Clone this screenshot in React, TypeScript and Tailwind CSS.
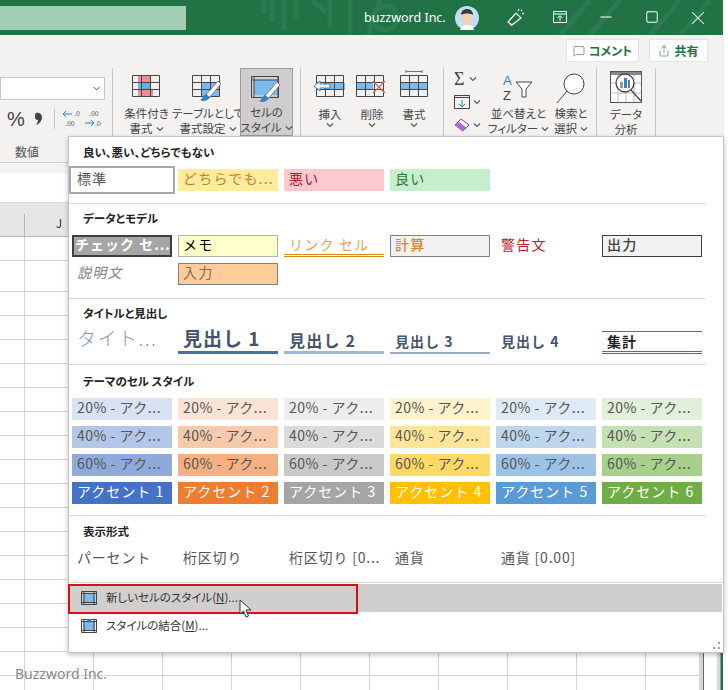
import { Minus, Square, X, MessageSquare, Share, ChevronDown } from "lucide-react";

const jp = { fontFamily: '"Noto Sans CJK JP", "Noto Sans", sans-serif' };

function Chev({ className = "" }: { className?: string }) {
  return (
    <svg width="8" height="6" viewBox="0 0 8 6" className={className}>
      <path d="M1 1.5 L4 4.5 L7 1.5" fill="none" stroke="#555" strokeWidth="1.1" />
    </svg>
  );
}

function TableBase({ children }: { children?: React.ReactNode }) {
  return (
    <svg width="30" height="24" viewBox="0 0 30 24">
      {children}
      <path d="M.5.5h27v21H.5zM.5 7.5h27M.5 14.5h27M9.5.5v21M18.5.5v21" fill="none" stroke="#444" />
    </svg>
  );
}

function Brush() {
  return (
    <g>
      <path d="M13 21 L26 6 L29 9 L17 23 Z" fill="#fff" stroke="#666" strokeWidth="0.8" />
      <path d="M8 25 C11 24 11 20 14 19 L18 22 C16 26 11 27 8 25Z" fill="#2e86c8" />
    </g>
  );
}

function RibbonBtn({ l1, l2, icon, w, active }: { l1: string; l2: string; icon: React.ReactNode; w: string; active?: boolean }) {
  return (
    <div className={`${w} h-[68px] shrink-0 flex flex-col items-center ${active ? "bg-[#cfcdcd] border border-[#9d9b9b]" : ""}`}>
      <div className="h-[39px] pt-[7px] flex items-start justify-center">{icon}</div>
      <div className="text-[11.5px] leading-[15px] text-[#444] text-center whitespace-nowrap [font-feature-settings:'palt']">{l1}</div>
      <div className="text-[11.5px] leading-[15px] text-[#444] text-center whitespace-nowrap flex items-center gap-[3px] [font-feature-settings:'palt']">
        {l2}
        <Chev />
      </div>
    </div>
  );
}

function Sep() {
  return <div className="w-px h-[68px] bg-[#c6c6c6] shrink-0" />;
}

type Tile = { t: string; c: string };

function StyleTile({ t, c }: Tile) {
  return (
    <div className={`w-[100px] h-[22px] shrink-0 pl-[5px] text-[14px] leading-[18px] tracking-[1.2px] whitespace-nowrap overflow-hidden ${c}`}>
      {t}
    </div>
  );
}

function Section({ title, children, full }: { title: string; children: React.ReactNode; full?: boolean }) {
  return (
    <div className={`border-b border-[#dcdcdc] ${full ? "w-full" : "w-[637px]"}`}>
      <div className="pl-[14px] text-[11.5px] font-bold leading-[16px] text-[#222] whitespace-nowrap [font-feature-settings:'palt']">{title}</div>
      {children}
    </div>
  );
}

const accents = [
  { a: "bg-[#d9e2f3]", b: "bg-[#b4c6e7]", c: "bg-[#8eaadb]", d: "bg-[#4472c4]", n: "アクセント 1" },
  { a: "bg-[#fbe4d5]", b: "bg-[#f7caac]", c: "bg-[#f4b083]", d: "bg-[#ed7d31]", n: "アクセント 2" },
  { a: "bg-[#ededed]", b: "bg-[#dbdbdb]", c: "bg-[#c9c9c9]", d: "bg-[#a5a5a5]", n: "アクセント 3" },
  { a: "bg-[#fff2cc]", b: "bg-[#ffe599]", c: "bg-[#ffd966]", d: "bg-[#ffc000]", n: "アクセント 4" },
  { a: "bg-[#deeaf6]", b: "bg-[#bdd6ee]", c: "bg-[#9cc2e5]", d: "bg-[#5b9bd5]", n: "アクセント 5" },
  { a: "bg-[#e2efd9]", b: "bg-[#c5e0b3]", c: "bg-[#a8d08d]", d: "bg-[#70ad47]", n: "アクセント 6" },
];

function Menu() {
  return (
    <div className="absolute left-[68px] top-[136px] w-[656px] h-[517px] bg-white border border-[#c8c8c8] shadow-[0_2px_5px_rgba(0,0,0,0.25)]">
      <div className="pt-[7px]">
        <Section title="良い、悪い、どちらでもない">
          <div className="flex gap-[6px] pl-[3px] pt-[9px] pb-[12px] items-center">
            <div className="w-[100px] h-[22px] shrink-0 pl-[5px] text-[14px] leading-[18px] tracking-[1.2px] text-[#555] outline-2 outline-[#a9a9a9] outline-offset-[1px]">標準</div>
            <StyleTile t="どちらでも..." c="bg-[#ffeb9c] text-[#b58a2a]" />
            <StyleTile t="悪い" c="bg-[#ffc7ce] text-[#a82030]" />
            <StyleTile t="良い" c="bg-[#c6efce] text-[#2d7a3a]" />
          </div>
        </Section>
        <div className="pt-[6px]">
          <Section title="データとモデル">
            <div className="grid grid-cols-[100px_100px_100px_100px_100px_100px] gap-x-[6px] gap-y-[6px] pl-[3px] pt-[9px] pb-[13px]">
              <div className="h-[22px] pl-[3px] bg-[#a5a5a5] text-white font-bold text-[14px] leading-[18px] tracking-[1px] whitespace-nowrap overflow-hidden outline-2 outline-offset-[-2px] outline-[#3f3f3f]">チェック セ...</div>
              <StyleTile t="メモ" c="bg-[#ffffcc] border border-[#b2b2b2] !pl-[4px] !leading-[17px]" />
              <StyleTile t="リンク セル" c="text-[#e0a060] border-b-[3px] border-double border-[#d98a1f]" />
              <StyleTile t="計算" c="bg-[#f2f2f2] text-[#e67e22] font-medium border border-[#7f7f7f] !pl-[4px] !leading-[17px]" />
              <StyleTile t="警告文" c="text-[#c0202a]" />
              <StyleTile t="出力" c="bg-[#f2f2f2] text-[#3f3f3f] font-medium border border-[#3f3f3f] !pl-[4px] !leading-[17px]" />
              <StyleTile t="説明文" c="italic text-[#7f7f7f]" />
              <StyleTile t="入力" c="bg-[#ffcc99] text-[#7f6a5a] border border-[#7f7f7f] !pl-[4px] !leading-[17px]" />
            </div>
          </Section>
        </div>
        <div className="pt-[6px]">
          <Section title="タイトルと見出し">
            <div className="flex gap-[6px] pl-[3px] pt-[1px] pb-[10px] items-end h-[43px]">
              <div className="w-[100px] h-[28px] shrink-0 pl-[5px] text-[19px] leading-[24px] tracking-[1.5px] text-[#8497b0] whitespace-nowrap font-light">タイト...</div>
              <div className="w-[100px] h-[28px] shrink-0 pl-[5px] text-[19px] leading-[23px] tracking-[1px] font-bold text-[#44546a] border-b-[3px] border-[#4472a8] whitespace-nowrap">見出し 1</div>
              <div className="w-[100px] h-[24px] shrink-0 pl-[5px] text-[16px] leading-[20px] tracking-[1.2px] font-bold text-[#44546a] border-b-[3px] border-[#a2b8d8] whitespace-nowrap">見出し 2</div>
              <div className="w-[100px] h-[22px] shrink-0 pl-[5px] text-[14px] leading-[19px] tracking-[1px] font-bold text-[#44546a] border-b-2 border-[#9aabc4] whitespace-nowrap">見出し 3</div>
              <div className="w-[100px] h-[22px] shrink-0 pl-[5px] text-[14px] leading-[19px] tracking-[1px] font-bold text-[#44546a] whitespace-nowrap">見出し 4</div>
              <div className="w-[100px] h-[23px] shrink-0 pl-[5px] text-[14px] leading-[18px] tracking-[1px] font-bold text-[#222] border-t border-b-[3px] [border-bottom-style:double] border-[#44719f] whitespace-nowrap">集計</div>
            </div>
          </Section>
        </div>
        <div className="pt-[8px]">
          <Section title="テーマのセル スタイル">
            <div className="grid grid-cols-[100px_100px_100px_100px_100px_100px] gap-x-[6px] gap-y-[6px] pl-[3px] pt-[9px] pb-[11px]">
              {accents.map((a, i) => <StyleTile key={i} t="20% - アク..." c={`${a.a} text-[#555] !tracking-[0.5px]`} />)}
              {accents.map((a, i) => <StyleTile key={i} t="40% - アク..." c={`${a.b} text-[#555] !tracking-[0.5px]`} />)}
              {accents.map((a, i) => <StyleTile key={i} t="60% - アク..." c={`${a.c} text-[#555] !tracking-[0.5px]`} />)}
              {accents.map((a, i) => <StyleTile key={i} t={a.n} c={`${a.d} text-white !tracking-[1px]`} />)}
            </div>
          </Section>
        </div>
        <div className="pt-[7px]">
          <Section full title="表示形式">
            <div className="flex gap-[6px] pl-[3px] pt-[9px] pb-[12px]">
              {["パーセント", "桁区切り", "桁区切り [0...", "通貨", "通貨 [0.00]"].map((t) => (
                <StyleTile key={t} t={t} c="text-[#555] !tracking-[0.8px]" />
              ))}
            </div>
          </Section>
        </div>
      </div>
      <div className="mt-[1px]">
        <div className="h-[28px] bg-[#d0cfcd] flex items-center pl-[12px] gap-[9px] mr-px">
          <svg width="16" height="14" viewBox="0 0 16 14"><rect x="2" y="2" width="12" height="10" fill="#7cb9ec" /><path d="M.5.5h15v13H.5zM.5 2.5h15M.5 11.5h15M3 .5v13M13 .5v13" fill="none" stroke="#444" /></svg>
          <span className="text-[11.5px] text-[#333] [font-feature-settings:'palt']">新しいセルのスタイル(<u>N</u>)...</span>
        </div>
        <div className="h-[28px] flex items-center pl-[12px] gap-[9px]">
          <svg width="16" height="14" viewBox="0 0 16 14"><rect x="2" y="2" width="12" height="10" fill="#7cb9ec" /><path d="M.5.5h15v13H.5zM.5 2.5h15M.5 11.5h15M3 .5v13M13 .5v13" fill="none" stroke="#444" /><path d="M5 0h6l-3 4z" fill="#2e75b6" /></svg>
          <span className="text-[11.5px] text-[#333] [font-feature-settings:'palt']">スタイルの結合(<u>M</u>)...</span>
        </div>
      </div>
      {/* callout */}
      <div className="absolute left-[-1px] top-[447px] w-[290px] h-[30px] border-2 border-[#d90f16]" />
      <svg className="absolute left-[170px] top-[462px]" width="14" height="20" viewBox="0 0 14 20">
        <path d="M1 1 L1 15 L4.5 12 L7 18 L9.5 17 L7 11 L12 11 Z" fill="#fff" stroke="#333" strokeWidth="1" />
      </svg>
      {/* resize grip */}
      <svg className="absolute right-[2px] bottom-[2px]" width="8" height="8" viewBox="0 0 8 8">
        <path d="M5 0h2v2H5zM0 5h2v2H0zM5 5h2v2H5z" fill="#a0a0a0" />
      </svg>
    </div>
  );
}

function TitleBar() {
  return (
    <div className="h-[35px] w-[723px] bg-[#217346] flex items-center relative text-white overflow-hidden">
      <div className="w-[186px] h-[24px] bg-[#a0cdb3] shrink-0" />
      <svg className="absolute left-[260px] top-0" width="460" height="35" viewBox="0 0 460 35">
        <path d="M4 0v14M12 0v22M24 0v30M36 0v20M52 0l14 12M70 0v28M90 0v35M120 0l-12 35M300 35l30-35M330 35l30-35M390 35l30-35M420 35l30-35" stroke="#2a7c50" strokeWidth="5" fill="none" />
        <circle cx="125" cy="18" r="12" stroke="#2a7c50" strokeWidth="5" fill="none" />
      </svg>
      <span className="absolute left-[364px] top-[8px] text-[12.5px] leading-[20px] whitespace-nowrap" style={{ fontFamily: '"Noto Sans", sans-serif' }}>buzzword Inc.</span>
      <svg className="absolute left-[455px] top-[6px]" width="24" height="24" viewBox="0 0 24 24">
        <circle cx="12" cy="12" r="12" fill="#bfe0f2" />
        <path d="M5 24c1-4 4-5 7-5s6 1 7 5z" fill="#fff" />
        <ellipse cx="12" cy="12" rx="5" ry="7" fill="#f5cfae" />
        <path d="M6 9c0-4 3-6 6-6s6 2 6 6c-3-2-9-2-12 0z" fill="#3a3a3a" />
      </svg>
      <svg className="absolute left-[506px] top-[8px]" width="20" height="20" viewBox="0 0 20 20">
        <path d="M2 14L10 5l5 5-9 7zM4 17l3-1M12 3l1-2M16 6l2-1M15 3l1-1" fill="none" stroke="#fff" strokeWidth="1.2" />
      </svg>
      <svg className="absolute left-[553px] top-[11px]" width="14" height="12" viewBox="0 0 14 12">
        <path d="M.5.5h13v11H.5zM.5 3h13M7 10V5M4.5 7L7 4.5 9.500 7" fill="none" stroke="#fff" />
      </svg>
      <Minus size={18} strokeWidth={1.4} className="absolute left-[597px] top-[8px]" />
      <Square size={14} strokeWidth={1.7} className="absolute left-[645px] top-[10px]" />
      <X size={22} strokeWidth={1.1} className="absolute left-[687px] top-[7px]" />
    </div>
  );
}

function Ribbon() {
  return (
    <div className="h-[128px] w-[723px] bg-[#f3f2f1] border-b border-[#d0d0d0] shadow-[0_1px_3px_rgba(0,0,0,0.15)]">
      <div className="h-[33px] flex justify-end items-start gap-[10px] pr-[15px] pt-[4px]">
        <div className="h-[23px] w-[73px] bg-white border border-[#e4e4e4] flex items-center justify-center gap-[4px] text-[12px] font-bold text-[#217346] [font-feature-settings:'palt']">
          <MessageSquare size={12} strokeWidth={1.2} />コメント
        </div>
        <div className="h-[23px] w-[59px] bg-white border border-[#e4e4e4] flex items-center justify-center gap-[4px] text-[12px] font-bold text-[#217346]">
          <Share size={12} strokeWidth={1.2} />共有
        </div>
      </div>
      <div className="flex items-start">
        <div className="w-[112px] shrink-0 pt-[9px]">
          <div className="w-[105px] h-[23px] bg-white border border-[#c8c8c8] flex items-center justify-end pr-[2px]">
            <ChevronDown size={11} className="text-[#444]" />
          </div>
          <div className="flex items-center h-[30px] mt-[4px] pl-[7px] text-[#444]">
            <span className="text-[20px] w-[27px]" style={{ fontFamily: '"Liberation Sans", sans-serif' }}>%</span>
            <svg width="10" height="14" viewBox="0 0 10 14" className="mr-[10px] shrink-0">
              <path d="M2 1c3-1 6 1 6 4 0 4-3 7-6 8 1-2 2-3 2-5-2 0-3-1-3-3 0-2 0-3 1-4z" fill="#444" />
            </svg>
            <span className="w-px h-[20px] bg-[#c6c6c6] mr-[6px]" />
            <svg width="42" height="20" viewBox="0 0 42 20" className="shrink-0">
              <path d="M11 5H2M5 2L2 5l3 3" fill="none" stroke="#2e86c8" />
              <text x="13" y="7" fontSize="7" fill="#555">.0</text>
              <text x="4" y="17" fontSize="7" fill="#555">.00</text>
              <text x="28" y="7" fontSize="7" fill="#555">.00</text>
              <path d="M24 14h9M30 11l3 3-3 3" fill="none" stroke="#2e86c8" />
              <text x="34" y="17" fontSize="7" fill="#555">.0</text>
            </svg>
          </div>
          <div className="text-center text-[12px] text-[#555] mt-[9px] w-[54px]">数値</div>
        </div>
        <Sep />
        <div className="w-[4px] shrink-0" />
        <RibbonBtn w="w-[59px]" l1="条件付き" l2="書式" icon={
          <TableBase>
            <rect x="6" y="1" width="12" height="6" fill="#f28b93" />
            <rect x="6" y="8" width="12" height="6" fill="#6aaee6" />
            <rect x="6" y="15" width="15" height="6" fill="#f28b93" />
          </TableBase>
        } />
        <RibbonBtn w="w-[64px]" l1="テーブルとして" l2="書式設定" icon={
          <svg width="32" height="28" viewBox="0 0 32 28">
            <rect x="10" y="7" width="18" height="14" fill="#7cb9ec" />
            <path d="M.5.5h27v21H.5zM.5 7.5h27M.5 14.500h27M9.500.5v21M18.500.5v21" fill="none" stroke="#444" />
            <Brush />
          </svg>
        } />
        <RibbonBtn active w="w-[53px]" l1="セルの" l2="スタイル" icon={
          <svg width="32" height="28" viewBox="0 0 32 28">
            <rect x="3" y="4" width="24" height="15" fill="#7cb9ec" />
            <path d="M.5.5h27v21H.5zM.5 4h27M3 .5v21M27 .5v21" fill="none" stroke="#444" />
            <Brush />
          </svg>
        } />
        <div className="w-[7px] shrink-0" />
        <Sep />
        <RibbonBtn w="w-[58px]" l1="挿入" l2="" icon={
          <svg width="34" height="24" viewBox="0 0 34 24">
            <rect x="10" y="8" width="22" height="7" fill="#7cb9ec" />
            <path d="M3.500.5h27v21h-27zM3.500 7.500h27M3.500 14.500h27M12.500.5v21M21.500.5v21" fill="none" stroke="#444" />
            <path d="M1 11l6-5v3h10v4H7v3z" fill="#fff" stroke="#2e86c8" />
          </svg>
        } />
        <RibbonBtn w="w-[26px]" l1="削除" l2="" icon={
          <svg width="32" height="24" viewBox="0 0 32 24">
            <rect x="1" y="8" width="16" height="7" fill="#7cb9ec" />
            <path d="M.5.5h27v21H.5zM.5 7.500h27M.5 14.500h27M9.500.5v21M18.500.5v21" fill="none" stroke="#444" />
            <path d="M17 6l12 12M29 6L17 18" stroke="#e0605f" strokeWidth="1.2" />
          </svg>
        } />
        <div className="w-[8px] shrink-0" />
        <RibbonBtn w="w-[42px]" l1="書式" l2="" icon={
          <svg width="28" height="28" viewBox="0 0 28 28" className="-mt-[5px]">
            <path d="M6 1.500h16M6 0v3M22 0v3" stroke="#2e86c8" fill="none" />
            <rect x="1" y="12" width="26" height="7" fill="#7cb9ec" />
            <path d="M.5 5.500h27v21H.5zM.5 12.500h27M.5 19.500h27M9.500 5.500v21M18.500 5.500v21" fill="none" stroke="#444" />
          </svg>
        } />
        <div className="w-[8px] shrink-0" />
        <Sep />
        <div className="w-[44px] shrink-0 flex flex-col pl-[10px] pt-[1px] gap-[3px]">
          <div className="flex items-center gap-[5px] h-[20px]">
            <span className="text-[18px] leading-[18px] text-[#444]" style={{ fontFamily: '"Liberation Serif", serif' }}>Σ</span>
            <Chev />
          </div>
          <div className="flex items-center gap-[3px] h-[20px]">
            <svg width="16" height="14" viewBox="0 0 16 14"><path d="M.5.5h15v13H.5zM.5 2.500h15" fill="none" stroke="#444" /><path d="M8 5v7M5 9l3 3 3-3" fill="none" stroke="#2e86c8" /></svg>
            <Chev />
          </div>
          <div className="flex items-center gap-[3px] h-[20px]">
            <svg width="16" height="14" viewBox="0 0 16 14"><path d="M1 7l6-6 8 6-6 6z" fill="#fff" stroke="#8d3aa8" /><path d="M1 7l4-3 8 6-4 3z" fill="#b46ac9" /></svg>
            <Chev />
          </div>
        </div>
        <div className="w-[61px] shrink-0">
          <RibbonBtn w="w-[61px]" l1="並べ替えと" l2="フィルター" icon={
            <svg width="32" height="32" viewBox="0 0 32 32" className="-mt-[2px]">
              <text x="0" y="12" fontSize="13" fill="#2e86c8" fontFamily="Liberation Sans">A</text>
              <text x="0" y="27" fontSize="13" fill="#444" fontFamily="Liberation Sans">Z</text>
              <path d="M13 9h16l-6 7v8h-4v-8z" fill="#fff" stroke="#444" />
            </svg>
          } />
        </div>
        <RibbonBtn w="w-[44px]" l1="検索と" l2="選択" icon={
          <svg width="30" height="32" viewBox="0 0 30 32" className="-mt-[2px]">
            <circle cx="18" cy="11" r="10" fill="#fff" stroke="#444" />
            <path d="M11 18L1 30" stroke="#444" />
          </svg>
        } />
        <div className="w-[3px] shrink-0" />
        <Sep />
        <div className="w-[58px] shrink-0 flex flex-col items-center">
          <div className="h-[39px] pt-[3px]">
            <svg width="32" height="32" viewBox="0 0 32 32">
              <rect x=".5" y=".5" width="31" height="31" fill="#fff" stroke="#555" />
              <rect x="1" y="1" width="30" height="3" fill="#888" />
              <path d="M1 12h30M1 22h30M8 4v27M16 4v27M24 4v27" stroke="#bbb" />
              <circle cx="15" cy="12" r="9" fill="#fff" stroke="#444" strokeWidth="1.3" />
              <rect x="10" y="11" width="3" height="6" fill="#999" />
              <rect x="14" y="7" width="3" height="10" fill="#2e86c8" />
              <rect x="18" y="9" width="2" height="8" fill="#777" />
              <path d="M21 19l10 11" stroke="#444" strokeWidth="1.3" />
            </svg>
          </div>
          <div className="text-[11.5px] leading-[15px] text-[#444] [font-feature-settings:'palt']">データ</div>
          <div className="text-[11.5px] leading-[15px] text-[#444]">分析</div>
        </div>
        <Sep />
      </div>
    </div>
  );
}

function Sheet() {
  const cols = Array.from({ length: 11 });
  // row 2 is taller than the rest in the reference
  const rows = [24, 31, 24, 24, 24, 24, 24, 24, 24, 24, 24, 24, 24, 24, 24, 24, 24, 24, 24];
  return (
    <div className="bg-white w-[723px]">
      <div className="h-[10px] bg-[#f3f2f1]" />
      <div className="h-[30px] bg-white border-b border-[#d6d6d6]" />
      <div className="flex">
        <div className="w-[699px] overflow-hidden shrink-0">
          <div className="h-[34px] bg-[#e6e6e6] border-b border-[#b5b5b5] flex items-end">
            {cols.map((_, i) => (
              <div key={i} className={`h-[22px] shrink-0 border-r border-[#b5b5b5] ${i === 0 ? "w-[25px]" : "w-[69px] text-center text-[12px] text-[#333]"}`}>
                {i === 1 ? "J" : ""}
              </div>
            ))}
          </div>
          {rows.map((h, r) => (
            <div key={r} className="flex border-b border-[#d4d4d4]" style={{ height: h }}>
              {cols.map((_, i) => (
                <div key={i} className={`shrink-0 border-r border-[#d4d4d4] ${i === 0 ? "w-[25px]" : "w-[69px]"}`} />
              ))}
            </div>
          ))}
        </div>
        {/* vertical scrollbar and window edge */}
        <div className="flex-1 h-[500px] flex bg-white">
          <div className="w-[5px] bg-[#d8d8d8] border-r border-[#666]" />
          <div className="w-[13px]" />
          <div className="w-[4px] bg-[#d8d8d8] border-r border-[#999]" />
          <div className="w-[2px] bg-[#217346]" />
        </div>
      </div>
    </div>
  );
}

export default function App() {
  return (
    <div className="w-[728px] h-[690px] bg-white overflow-hidden" style={jp}>
      <div className="relative w-[728px] h-[690px] overflow-hidden">
        <TitleBar />
        <Ribbon />
        <Sheet />
        <Menu />
        <div className="absolute left-[15px] top-[665px] text-[14px] leading-[18px] text-[#8a8a8a]" style={{ fontFamily: '"Noto Sans", sans-serif' }}>Buzzword Inc.</div>
      </div>
    </div>
  );
}
